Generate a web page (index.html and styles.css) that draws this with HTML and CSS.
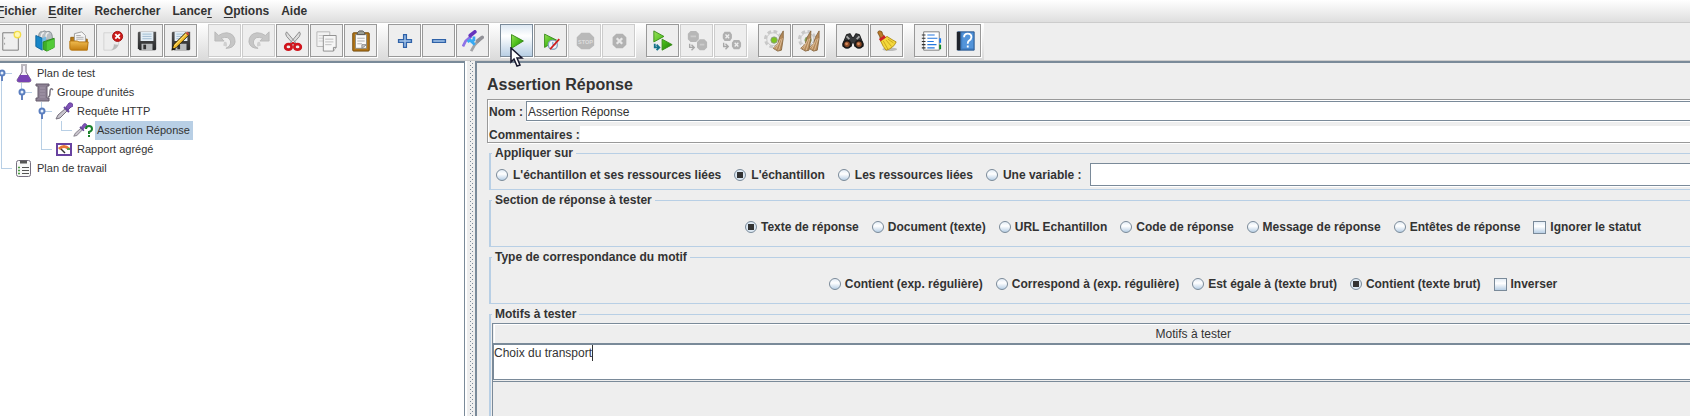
FILE: index.html
```html
<!DOCTYPE html>
<html lang="fr">
<head>
<meta charset="utf-8">
<title>Plan de test</title>
<link rel="stylesheet" href="styles.css">
</head>
<body>
<svg class="defs" aria-hidden="true">
  <defs>
    <linearGradient id="green" x1="0" y1="0" x2="1" y2="1"><stop offset="0" stop-color="#9be05a"/><stop offset=".5" stop-color="#4cc01c"/><stop offset="1" stop-color="#1f7a08"/></linearGradient>
    <linearGradient id="gold" x1="0" y1="0" x2="0" y2="1"><stop offset="0" stop-color="#f0bc50"/><stop offset="1" stop-color="#c47e10"/></linearGradient>
    <linearGradient id="steel" x1="0" y1="0" x2="0" y2="1"><stop offset="0" stop-color="#555"/><stop offset="1" stop-color="#26282a"/></linearGradient>
    <symbol id="disk" viewBox="0 0 24 24"><path d="M3 2h19v19l-1 1H4l-2-2V3z" fill="url(#steel)"/><path d="M5 2h14v10H5z" fill="#e4eef6"/><path d="M7 4.500h10M7 7h10M7 9.500h10" stroke="#9db9cf"/><path d="M6 15h12v7H6z" fill="#b9bcbe"/><path d="M8 16h3v5H8z" fill="#333"/></symbol>
    <symbol id="cog" viewBox="0 0 24 24"><circle cx="10" cy="10" r="8.500" fill="none" stroke="#c8c8c8" stroke-width="3" stroke-dasharray="4 2.700"/><circle cx="10" cy="10" r="7" fill="#eee" stroke="#c4c4c4"/><circle cx="11" cy="11" r="3.500" fill="#7cc520" stroke="#8a9a80"/></symbol>
    <symbol id="broom" viewBox="0 0 14 24"><path d="M13 1 9 8 7 15 2 20l5 3 4-1 2-13z" fill="#b58a5a" stroke="#8a6a44"/><path d="M10 10 5 21M12 9 8 22M8 14l-5 6" stroke="#dec09a" fill="none"/></symbol>
    <symbol id="handle" viewBox="0 0 8 12"><path d="M4 6v6" stroke="#6382bf" stroke-width="2"/><circle cx="4" cy="4" r="2.500" fill="#e8f0fa" stroke="#5b7fc0" stroke-width="2"/></symbol>
    <symbol id="pipette" viewBox="0 0 18 18"><path d="M1 17 3 13 11 6l2 2-8 8z" fill="#c8c4cc" stroke="#77717d"/><path d="m9 5 5 5" stroke="#66449c" stroke-width="2"/><path d="m11 5 3-4q3-1 4 2 0 2-2 2l-3 3z" fill="#8052b8" stroke="#66449c"/></symbol>
  </defs>
</svg>

<nav class="menubar" aria-label="Menu">
  <button type="button"><u>F</u>ichier</button>
  <button type="button"><u>E</u>diter</button>
  <button type="button">Rechercher</button>
  <button type="button">Lance<u>r</u></button>
  <button type="button"><u>O</u>ptions</button>
  <button type="button">Aide</button>
</nav>

<div class="toolbar-row">
<div class="toolbar" role="toolbar" aria-label="Outils">
  <div class="group">
    <button type="button" aria-label="Nouveau"><svg viewBox="0 0 24 24"><path d="M3 3h17v19H3z" fill="#efefef" stroke="#777"/><path d="M5 8v2M5 14v2" stroke="#999"/><circle cx="19" cy="5" r="3.500" fill="#fff8b0" stroke="#f2dc48" stroke-width="1.500"/></svg></button>
    <button type="button" aria-label="Modèles"><svg viewBox="0 0 24 24"><path d="M5 8q0-7 4-6 2-2 5 0 5-2 6 5v4H5z" fill="#b7bec3" stroke="#858d92"/><path d="M8 8q0-5 3-5M13 8q0-5 3-5" fill="none" stroke="#eee" stroke-width="1.500"/><path d="m2 6 7 3v13l-7-4z" fill="#1686c8" stroke="#0c659e"/><path d="m9 9 4-2v6l-4 9z" fill="#6fbce8"/><path d="m10 13 12-4v10l-8 4-4-2z" fill="#3fae28" stroke="#278a16"/><path d="m14 13 8-3v9l-8 4z" fill="#53cb38"/></svg></button>
    <button type="button" aria-label="Ouvrir"><svg viewBox="0 0 24 24"><path d="M3 8h6l2 2h10v10H3z" fill="#b77a16" stroke="#94600c"/><path d="M7 4 15 2l4 4v9H7z" fill="#f6f6f6" stroke="#999"/><path d="M9 6h5M9 8h8M9 10h8" stroke="#aaa"/><path d="M2 12h8l2 1h10l-1 9H4q-2 0-2-2z" fill="url(#gold)" stroke="#b3740f"/></svg></button>
    <button type="button" aria-label="Fermer"><svg viewBox="0 0 24 24"><path d="M2 3h16v13q-2 5-7 6H2z" fill="#ededed" stroke="#d2d2d2"/><path d="M18 16q-5 0-5-1 0 5-3 7 6-1 8-6z" fill="#bbb"/><circle cx="17" cy="7" r="5.500" fill="#cb1b1b" stroke="#a00c0c"/><path d="m14.500 4.500 5 5m0-5-5 5" stroke="#fff" stroke-width="2"/></svg></button>
    <button type="button" aria-label="Enregistrer"><svg><use href="#disk"/></svg></button>
    <button type="button" aria-label="Enregistrer sous"><svg viewBox="0 0 24 24"><use href="#disk"/><path d="m2 22 2-6L17 3l3 3L7 19z" fill="#f4bd2a" stroke="#2c240c"/><path d="m5 17 13-13" stroke="#ffe88a"/><path d="m17 3 2-1 2 2-1 2z" fill="#cf4a3a"/><path d="m2 22 1-3 2 2z" fill="#111"/></svg></button>
  </div>
  <div class="group">
    <button type="button" disabled aria-label="Annuler"><svg viewBox="0 0 24 24"><path d="M1 2v10h10L8 9q8-3 10 3 1 5-5 8 9 0 10-7 0-9-9-10-5 0-9 3z" fill="#c6c6c6" stroke="#b8b8b8"/><path d="M11 13q4-1 3 5-2 0-4-1" fill="#d0d0d0"/></svg></button>
    <button type="button" disabled aria-label="Rétablir"><svg viewBox="0 0 24 24"><path d="M23 2v10H13l3-3q-8-3-10 3-1 5 5 8-9 0-10-7 0-9 9-10 5 0 9 3z" fill="#c6c6c6" stroke="#b8b8b8"/><path d="M13 13q-4-1-3 5 2 0 4-1" fill="#d0d0d0"/></svg></button>
    <button type="button" aria-label="Couper"><svg viewBox="0 0 24 24"><path d="M5 2q-2 2 0 5l8 9 2-2zM19 2q2 2 0 5l-8 9-2-2z" fill="#ddd" stroke="#888"/><ellipse cx="7" cy="18.500" rx="3.500" ry="3" fill="none" stroke="#d0141c" stroke-width="3"/><ellipse cx="17" cy="18.500" rx="3.500" ry="3" fill="none" stroke="#d0141c" stroke-width="3"/><path d="m9 16 3-2 3 2" fill="none" stroke="#d0141c" stroke-width="2"/></svg></button>
    <button type="button" aria-label="Copier"><svg viewBox="0 0 24 24"><path d="M1 2h14v16H1z" fill="#f2f2f2" stroke="#b5b5b5"/><path d="M3 6h9M3 9h9M3 12h9" stroke="#ccc"/><path d="M8 6h14v13l-3 4H8z" fill="#f6f6f6" stroke="#8a8a8a"/><path d="M10 10h9M10 13h9M10 16h7" stroke="#bbb"/><path d="M19 23v-4h3" fill="#ddd" stroke="#8a8a8a"/></svg></button>
    <button type="button" aria-label="Coller"><svg viewBox="0 0 24 24"><rect x="3" y="3" width="18" height="20" rx="1" fill="#b37618" stroke="#6e4609"/><path d="M6 5h12v15H6z" fill="#fafafa" stroke="#8a8a80"/><path d="M8 9h8M8 12h8M8 15h5" stroke="#aaa"/><path d="M13 20v-4h5z" fill="#ccc" stroke="#888"/><path d="M8 5V3l2-2h4l2 2v2z" fill="#9b9f97" stroke="#555"/></svg></button>
  </div>
  <div class="group">
    <button type="button" aria-label="Développer"><svg viewBox="0 0 24 24"><path d="M10.500 5h3v5.500H19v3h-5.500V19h-3v-5.500H5v-3h5.500z" fill="#a9c8ec" stroke="#2f62a8" stroke-width="1.500"/></svg></button>
    <button type="button" aria-label="Réduire"><svg viewBox="0 0 24 24"><path d="M5 10.500h14v3H5z" fill="#a9c8ec" stroke="#2f62a8" stroke-width="1.500"/></svg></button>
    <button type="button" aria-label="Activer"><svg viewBox="0 0 24 24"><path d="m10 23 4-7 5-5" stroke="#a3a3a6" stroke-width="3" fill="none"/><path d="m17 12 5-4" stroke="#919197" stroke-width="4" stroke-linecap="round"/><path d="m1 18 3-6 6-5" stroke="#8f72e6" stroke-width="3" fill="none"/><path d="m9 6 5-4" stroke="#6634bd" stroke-width="4" stroke-linecap="round"/><path d="m6 13 3-2 5 5M13 7v4l-4 2" stroke="#38a9f2" stroke-width="3" fill="none"/></svg></button>
  </div>
  <div class="group">
    <button type="button" class="hover" aria-label="Lancer"><svg viewBox="0 0 24 24"><path d="M6 5 19 12 6 20z" fill="url(#green)" stroke="#388b18"/></svg>
      <svg class="pointer" viewBox="0 0 14 20"><path d="M1 1v14l3-3 3 7 3-1-3-7h5z" fill="#fff" stroke="#18182e" stroke-width="1.500"/></svg></button>
    <button type="button" aria-label="Lancer sans pause"><svg viewBox="0 0 24 24"><path d="M5 4.500 18 11 5 19z" fill="url(#green)" stroke="#388b18"/><circle cx="14" cy="16" r="5" fill="#eef4fa" stroke="#8aa4bf" stroke-width="1.500"/><path d="M14 13v3h3" fill="none" stroke="#5889bc"/><path d="M11 21 21 10" stroke="#cf1c1c" stroke-width="2"/></svg></button>
    <button type="button" disabled aria-label="Arrêter"><svg viewBox="0 0 24 24"><path d="M8 3h9l5 5v9l-5 4H8l-5-4V8z" fill="#b9b9b9"/><text x="12.500" y="15" class="stop">STOP</text></svg></button>
    <button type="button" disabled aria-label="Éteindre"><svg viewBox="0 0 24 24"><path d="M9 4h7l4 4v8l-4 4H9l-4-4V8z" fill="#b2b2b2"/><path d="m9.500 9 6 6m0-6-6 6" stroke="#e8e8e8" stroke-width="2.500"/></svg></button>
  </div>
  <div class="group">
    <button type="button" aria-label="Démarrer à distance"><svg viewBox="0 0 24 24"><path d="M2 1 13 7 2 13zM11 10 22 16 11 22z" fill="url(#green)" stroke="#388b18"/><path d="M3 15v4h4M5 16l3 3-3 3" fill="none" stroke="#15728a" stroke-width="2"/></svg></button>
    <button type="button" disabled aria-label="Arrêter à distance"><svg viewBox="0 0 24 24"><path d="M5 1h6l3 3v6l-3 3H5l-3-3V4zM15 10h5l3 3v6l-3 3h-5l-3-3v-6z" fill="#b7b7b7"/><path d="M5 7h6M15 16h5" stroke="#ccc" stroke-width="2"/><path d="M4 15v4h4M6 16l3 3-3 3" fill="none" stroke="#a8a8a8" stroke-width="1.500"/></svg></button>
    <button type="button" disabled aria-label="Éteindre à distance"><svg viewBox="0 0 24 24"><path d="M5 2h6l2 3v4l-2 3H5L3 9V5zM15 11h6l2 3v4l-2 3h-6l-2-3v-4z" fill="#b0b0b0"/><path d="m6 5 4 4m0-4-4 4M16 14l4 4m0-4-4 4" stroke="#eee" stroke-width="1.500"/><path d="M4 14v4h4M6 15l3 3-3 3" fill="none" stroke="#a8a8a8" stroke-width="1.500"/></svg></button>
  </div>
  <div class="group">
    <button type="button" aria-label="Nettoyer"><svg viewBox="0 0 24 24"><use href="#cog" width="24" height="24"/><use href="#broom" x="8" width="14" height="24"/></svg></button>
    <button type="button" aria-label="Nettoyer tout"><svg viewBox="0 0 24 24"><use href="#cog" width="24" height="24"/><use href="#broom" x="1" width="14" height="24"/><use href="#broom" x="10" width="14" height="24"/></svg></button>
  </div>
  <div class="group">
    <button type="button" aria-label="Rechercher"><svg viewBox="0 0 24 24"><path d="m5 5 4-1 2 4h2l2-4 4 1 4 10v3H14l-1-4h-2l-1 4H1v-3z" fill="#36383a" stroke="#151515"/><path d="m5 7 3 3M19 7l-3 3" stroke="#aaa" stroke-width="2"/><circle cx="5.500" cy="15.500" r="4" fill="#8c4a26" stroke="#1a1a1a" stroke-width="2"/><circle cx="18.500" cy="15.500" r="4" fill="#8c4a26" stroke="#1a1a1a" stroke-width="2"/><circle cx="5" cy="15" r="1.500" fill="#d58c5e"/><circle cx="18" cy="15" r="1.500" fill="#d58c5e"/></svg></button>
    <button type="button" aria-label="Effacer la recherche"><svg viewBox="0 0 24 24"><ellipse cx="15" cy="21" rx="8" ry="2" fill="#bbb"/><path d="M2 3q0-2 2-2 3 0 3 3l2 4-4 2q-1-4-2-5z" fill="#bd7b2a" stroke="#7a4a10"/><path d="m5 12 7-5q6 4 10 6-3 7-11 9-3-3-6-10z" fill="#f4d83c" stroke="#b08c10"/><path d="m4 11 6-4" stroke="#cf2027" stroke-width="3"/><path d="m8 12 5 9M11 11l6 7M13 10l6 4" stroke="#c8a41c"/></svg></button>
  </div>
  <div class="group">
    <button type="button" aria-label="Journal"><svg viewBox="0 0 24 24"><path d="M4 2h17v20H4z" fill="#fff" stroke="#777"/><path d="M8 5.500h8M8 9h11M8 12.500h7M8 16h10M8 19.500h8" stroke="#2477dd" stroke-width="1.200"/><path d="M2 5.500h4M2 9h4M2 12.500h4M2 16h4M2 19.500h4" stroke="#333" stroke-width="1.200"/><path d="M21 9h2v5h-2z" fill="#1477f0"/><path d="M21 16h2v5h-2z" fill="#0b8a22"/></svg></button>
    <button type="button" aria-label="Aide"><svg viewBox="0 0 24 24"><path d="M4 2h18v20H4z" fill="#427fc4" stroke="#28588f"/><path d="M3 2h4v20H3z" fill="#20242c"/><path d="M9 3h12v17H9z" fill="#5394da"/><path d="M11 8q0-4 4-4t4 4q0 2-3 4-1 1-1 3M15 17v2" fill="none" stroke="#fff" stroke-width="2"/></svg></button>
  </div>
</div>
</div>

<div class="workspace">
  <aside class="tree-pane">
    <ul class="tree">
      <li><svg class="w1" viewBox="0 0 35 19"><path d="M1.500 9v10M1.500 9.500H12" class="guide"/><use href="#handle" x="-2" y="5" width="8" height="12"/><path d="M21 1h6M22 2v6l-5 8q0 2 2 2h10q2 0 2-2l-5-8V2" fill="#f4f1f8" stroke="#77717d"/><path d="m20 11-3 5q0 2 2 2h10q2 0 2-2l-3-5z" fill="#7843b4"/></svg><span>Plan de test</span></li>
      <li><svg class="w2" viewBox="0 0 55 19"><path d="M1.500 0v19M21.500 0v10M21.500 9.500H32" class="guide"/><use href="#handle" x="18" y="5" width="8" height="12"/><path d="M36 1h13v2h-2v12h2v3H36v-3h2V3h-2z" fill="#8d8194" stroke="#665c6d"/><path d="M40 5h5M40 8h5M40 11h5M40 14h5" stroke="#a398aa"/><path d="M48 14q2 0 2-5t3-2" fill="none" stroke="#77717d" stroke-width="1.500"/></svg><span>Groupe d'unités</span></li>
      <li><svg class="w3" viewBox="0 0 75 19"><path d="M1.500 0v19M41.500 0v19M41.500 9.500H52" class="guide"/><use href="#handle" x="38" y="5" width="8" height="12"/><use href="#pipette" x="55" y="0" width="18" height="18"/></svg><span>Requête HTTP</span></li>
      <li><svg class="w4" viewBox="0 0 95 19"><path d="M1.500 0v19M41.500 0v19M61.500 0v10M61.500 9.500H72" class="guide"/><use href="#pipette" x="73" y="2" width="14" height="14"/><path d="M86 8q0-3 3-3t3 3q0 2-3 3v2M89 14v2" fill="none" stroke="#18802a" stroke-width="2"/></svg><span class="selected">Assertion Réponse</span></li>
      <li><svg class="w3" viewBox="0 0 75 19"><path d="M1.500 0v19M41.500 0v10M41.500 9.500H52" class="guide"/><path d="M57 4h14v11H57z" fill="#fff" stroke="#6842a0" stroke-width="2"/><path d="M59 9q5-5 10 0" fill="none" stroke="#e67835" stroke-width="3"/><path d="m61 9 4 4" stroke="#333" stroke-width="1.500"/><path d="M67 9h3" stroke="#58a04c" stroke-width="2"/></svg><span>Rapport agrégé</span></li>
      <li><svg class="w1" viewBox="0 0 35 19"><path d="M1.500 0v10M1.500 9.500H12" class="guide"/><rect x="16.500" y="1.500" width="14" height="16" rx="2" fill="#f8f8f8" stroke="#766f80"/><path d="M20 3h7" stroke="#555" stroke-width="3"/><path d="M22 8.500h7M22 11.500h7M22 14.500h7" stroke="#555"/><path d="M18 8.500h2M18 11.500h2M18 14.500h2" stroke="#4c9d42" stroke-width="1.500"/></svg><span>Plan de travail</span></li>
    </ul>
  </aside>
  <div class="splitter" role="separator"></div>
  <main class="editor">
    <form class="editor-content">
      <h1>Assertion Réponse</h1>
      <div class="identity">
        <div class="line name"><label for="nom">Nom :</label><input id="nom" type="text" value="Assertion Réponse"></div>
        <div class="line comment"><label for="com">Commentaires :</label><input id="com" type="text"></div>
      </div>
      <fieldset class="scope">
        <legend>Appliquer sur</legend>
        <div class="choices">
          <label><input type="radio" name="scope">L'échantillon et ses ressources liées</label>
          <label><input type="radio" name="scope" checked>L'échantillon</label>
          <label><input type="radio" name="scope">Les ressources liées</label>
          <label><input type="radio" name="scope">Une variable :</label>
          <input type="text" class="variable" aria-label="Nom de la variable">
        </div>
      </fieldset>
      <fieldset class="centered">
        <legend>Section de réponse à tester</legend>
        <div class="choices">
          <label><input type="radio" name="field" checked>Texte de réponse</label>
          <label><input type="radio" name="field">Document (texte)</label>
          <label><input type="radio" name="field">URL Echantillon</label>
          <label><input type="radio" name="field">Code de réponse</label>
          <label><input type="radio" name="field">Message de réponse</label>
          <label><input type="radio" name="field">Entêtes de réponse</label>
          <label><input type="checkbox">Ignorer le statut</label>
        </div>
      </fieldset>
      <fieldset class="centered">
        <legend>Type de correspondance du motif</legend>
        <div class="choices">
          <label><input type="radio" name="match">Contient (exp. régulière)</label>
          <label><input type="radio" name="match">Correspond à (exp. régulière)</label>
          <label><input type="radio" name="match">Est égale à (texte brut)</label>
          <label><input type="radio" name="match" checked>Contient (texte brut)</label>
          <label><input type="checkbox">Inverser</label>
        </div>
      </fieldset>
      <fieldset class="patterns">
        <legend>Motifs à tester</legend>
        <div class="table-pane">
          <table>
            <thead><tr><th scope="col">Motifs à tester</th></tr></thead>
            <tbody><tr><td><input type="text" value="Choix du transport" aria-label="Motif"></td></tr></tbody>
          </table>
        </div>
      </fieldset>
    </form>
  </main>
</div>
</body>
</html>
```
FILE: styles.css
```css
* { box-sizing: border-box; }

html, body { height: 100%; }

body {
  margin: 0;
  display: flex;
  flex-direction: column;
  overflow: hidden;
  background: #eee;
  color: #333;
  font: bold 12px/16px "Liberation Sans", Arial, sans-serif;
}

button, input { font: inherit; color: inherit; }

.defs { position: absolute; width: 0; height: 0; }

/* Menu bar */
.menubar {
  display: flex;
  flex: none;
  gap: 12px;
  height: 23px;
  padding: 3px 0 0 0;
  margin-left: -3px;
  border-bottom: 1px solid #ccc;
  background: linear-gradient(#fff, #dedede);
}
.menubar button { height: 16px; padding: 0; border: 0; background: none; }
.menubar u { text-underline-offset: 2px; }

/* Toolbar */
.toolbar-row { display: flex; flex: none; height: 38px; border-bottom: 1px solid #ccc; }
.toolbar {
  display: flex;
  gap: 11px;
  margin-left: -6px;
  padding: 1px 3px 0 0;
  background: linear-gradient(#fff, #dadada);
}
.group { display: flex; gap: 1px; }
.toolbar button {
  position: relative;
  display: flex;
  align-items: center;
  justify-content: center;
  width: 33px;
  height: 33px;
  padding: 0;
  border: 1px solid #999;
  background: #eee;
  box-shadow: 1px 1px #fff;
}
.toolbar button:disabled { border-color: #ccc; }
.toolbar button.hover {
  border-color: #7a8a99;
  background: linear-gradient(#dde8f3, #fff 35%, #b8cfe5);
}
.toolbar svg { width: 22px; height: 22px; }
.toolbar .pointer { position: absolute; left: 9px; top: 22px; width: 14px; height: 20px; z-index: 2; }
.stop { font-size: 6px; fill: #ddd; text-anchor: middle; }

/* Split view */
.workspace { display: flex; flex: 1; min-height: 0; }
.tree-pane {
  flex: 0 0 465px;
  background: #fff;
  border-top: 2px solid #7a8a99;
  border-right: 1px solid #7a8a99;
}
.tree { margin: 0; padding: 1px 0 0; list-style: none; font-size: 11px; font-weight: normal; }
.tree li { display: flex; align-items: center; height: 19px; }
.tree svg { flex: none; height: 19px; }
.tree span { padding: 0 3px 0 2px; line-height: 19px; }
.tree .selected { background: #b8cfe5; }
.w1 { width: 35px; }
.w2 { width: 55px; }
.w3 { width: 75px; }
.w4 { width: 95px; }
.guide { fill: none; stroke: #b8cfe5; }

.splitter {
  flex: 0 0 10px;
  border-left: 2px solid #fff;
  background:
    conic-gradient(from 270deg at 1px 1px, #7a8a99 90deg, transparent 0) 3px 0 / 5px 4px repeat-y,
    conic-gradient(from 270deg at 1px 1px, #7a8a99 90deg, transparent 0) 5px 2px / 5px 4px repeat-y,
    #eee;
}

/* The form is wider than the visible part of the editor */
.editor {
  flex: 1;
  min-width: 0;
  overflow: hidden;
  border: solid #7a8a99;
  border-width: 2px 0 0 2px;
}
.editor-content {
  display: flex;
  flex-direction: column;
  height: 100%;
  margin-right: -206px;
  padding: 12px 0 0 10px;
}
h1 { margin: 0 0 4px; font-size: 16px; line-height: 20px; }

.identity {
  margin-bottom: 2px;
  padding: 1px 1px 0;
  border: 1px solid #999;
  box-shadow: inset 1px 1px #fff, 1px 1px #fff;
}
.line { display: flex; }
.line label { padding-top: 1px; }
.line input { flex: 1; min-width: 0; border: 0; background: #fff; outline: 0; }
.line.name { gap: 3px; margin-bottom: 5px; }
.line.name label, .line.name input { height: 20px; line-height: 20px; }
.line.name input {
  padding: 1px 1px 0;
  border: 1px solid #7a8a99;
  font-weight: normal;
  box-shadow: 0 1px #fff;
}
.line.comment { height: 16px; }

fieldset {
  min-width: 0;
  margin: 0 0 2px 2px;
  padding: 0;
  border: 1px solid #b8cfe5;
  border-left-width: 2px;
}
legend { margin-left: 1px; padding: 0 3px; }
.choices { display: flex; align-items: center; gap: 13px; }
.choices label { display: flex; align-items: center; gap: 5px; flex: none; }
.scope .choices { padding: 2px 0 3px 5px; }
.centered .choices { justify-content: center; height: 38px; }
.centered .choices label { gap: 4px; }

input[type="radio"], input[type="checkbox"] {
  appearance: none;
  flex: none;
  width: 12px;
  height: 12px;
  margin: 0;
  border: 1px solid #7a8a99;
  background: linear-gradient(#e4edf6, #fff 40%, #b8cfe5);
}
input[type="radio"] { border-radius: 50%; }
input[type="checkbox"] { width: 13px; height: 13px; }
input[type="radio"]:checked {
  background: linear-gradient(#333, #333) center / 6px 6px no-repeat, #dce8f3;
}
.variable {
  flex: 1;
  height: 23px;
  margin-left: -5px;
  padding: 0 2px;
  border: 1px solid #7a8a99;
  background: #fff;
  box-shadow: 0 1px #fff;
}

.patterns { display: flex; flex-direction: column; flex: 1; margin-bottom: 0; border-bottom: 0; }
.table-pane { flex: 1; margin: 1px 1px 0; border: 1px solid #7a8a99; border-bottom: 0; }
table { width: 100%; border-collapse: collapse; font-weight: normal; }
th {
  height: 20px;
  padding: 0;
  font-weight: normal;
  box-shadow: inset 1px 1px #fff;
}
td {
  height: 36px;
  padding: 0;
  vertical-align: top;
  background: #fff;
  border-top: 2px solid #7a8a99;
  border-left: 1px solid #7a8a99;
  border-bottom: 3px double #7a8a99;
}
td input {
  display: block;
  field-sizing: content;
  height: 16px;
  padding: 0;
  border: 0;
  border-right: 1px solid #333;
  background: #fff;
  font-weight: normal;
  outline: 0;
}
```
